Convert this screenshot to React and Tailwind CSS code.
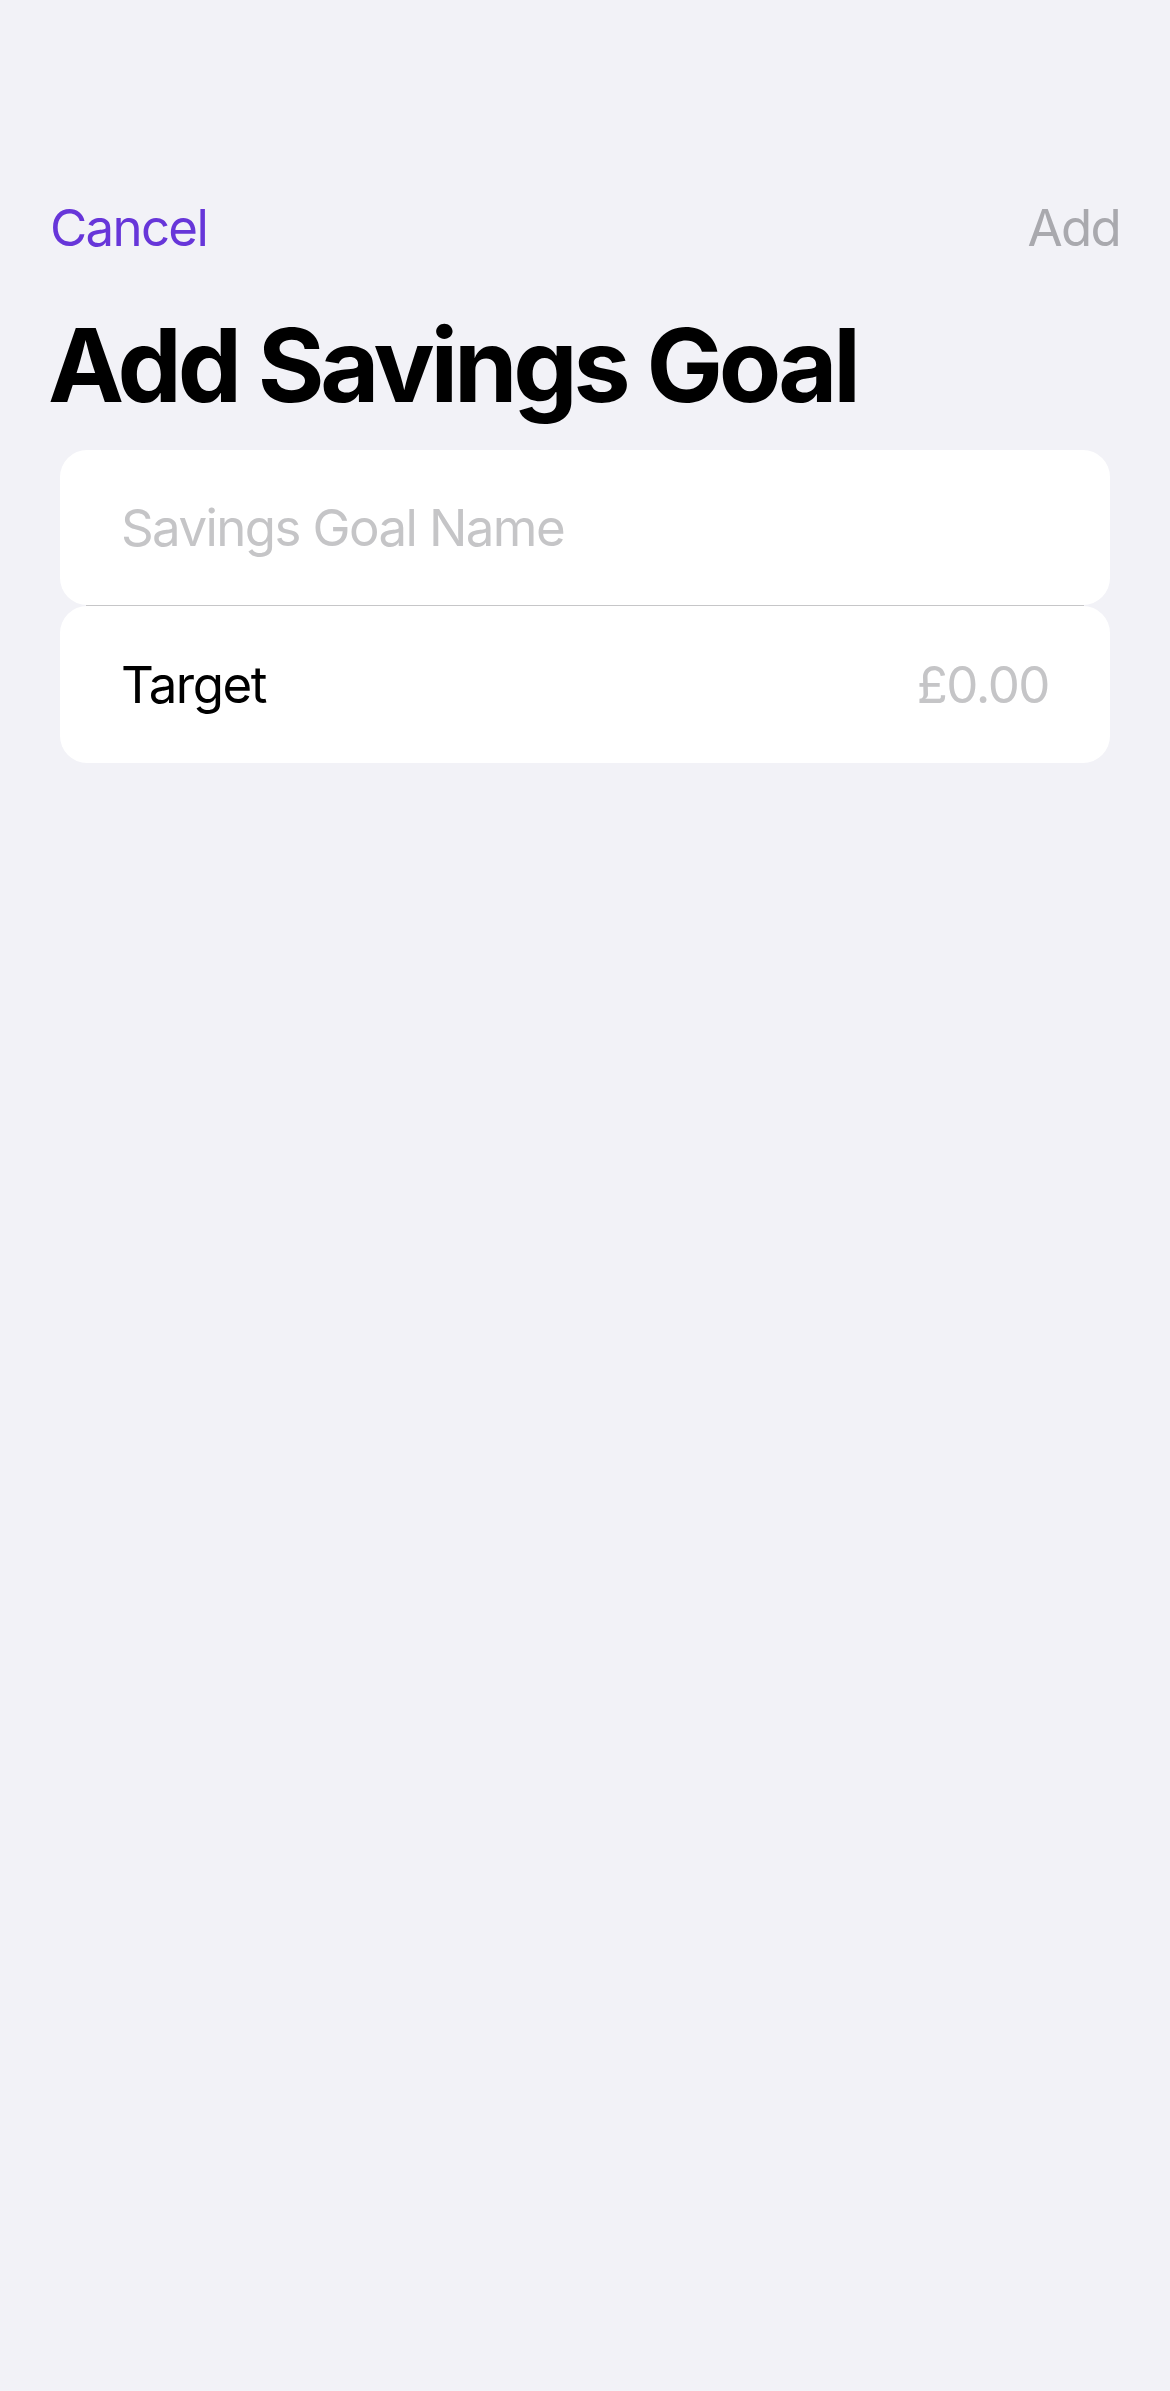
export default function App() {
    return (
        <div className="min-h-screen w-full bg-[#f2f2f7] font-['Inter','Noto_Sans',sans-serif] antialiased">
            <div className="flex items-center justify-between px-[50px] pt-[197px] text-[51px] leading-[61px] tracking-[-1.7px]">
                <button className="text-[#6736d9]">Cancel</button>
                <button className="text-[#a9a9ae]">Add</button>
            </div>

            <h1 className="mt-[46px] px-[48px] text-[102px] font-bold leading-[122px] tracking-[-4.2px] text-black">
                Add Savings Goal
            </h1>

            <div className="mx-[60px] mt-[24px] flex flex-col">
                <div className="flex h-[155px] items-center rounded-[27px] bg-white px-[61px]">
                    <span className="text-[51px] leading-[61px] tracking-[-1.6px] text-[#c5c5c7]">Savings Goal Name</span>
                </div>
                <div className="mx-[26px] h-px bg-[#c6c6c8]" />
                <div className="flex h-[157px] items-center justify-between rounded-[27px] bg-white px-[61px]">
                    <span className="text-[51px] leading-[61px] tracking-[-1.5px] text-black">Target</span>
                    <span className="text-[51px] leading-[61px] tracking-[-1.5px] text-[#c5c5c7]">£0.00</span>
                </div>
            </div>
        </div>
    );
}
